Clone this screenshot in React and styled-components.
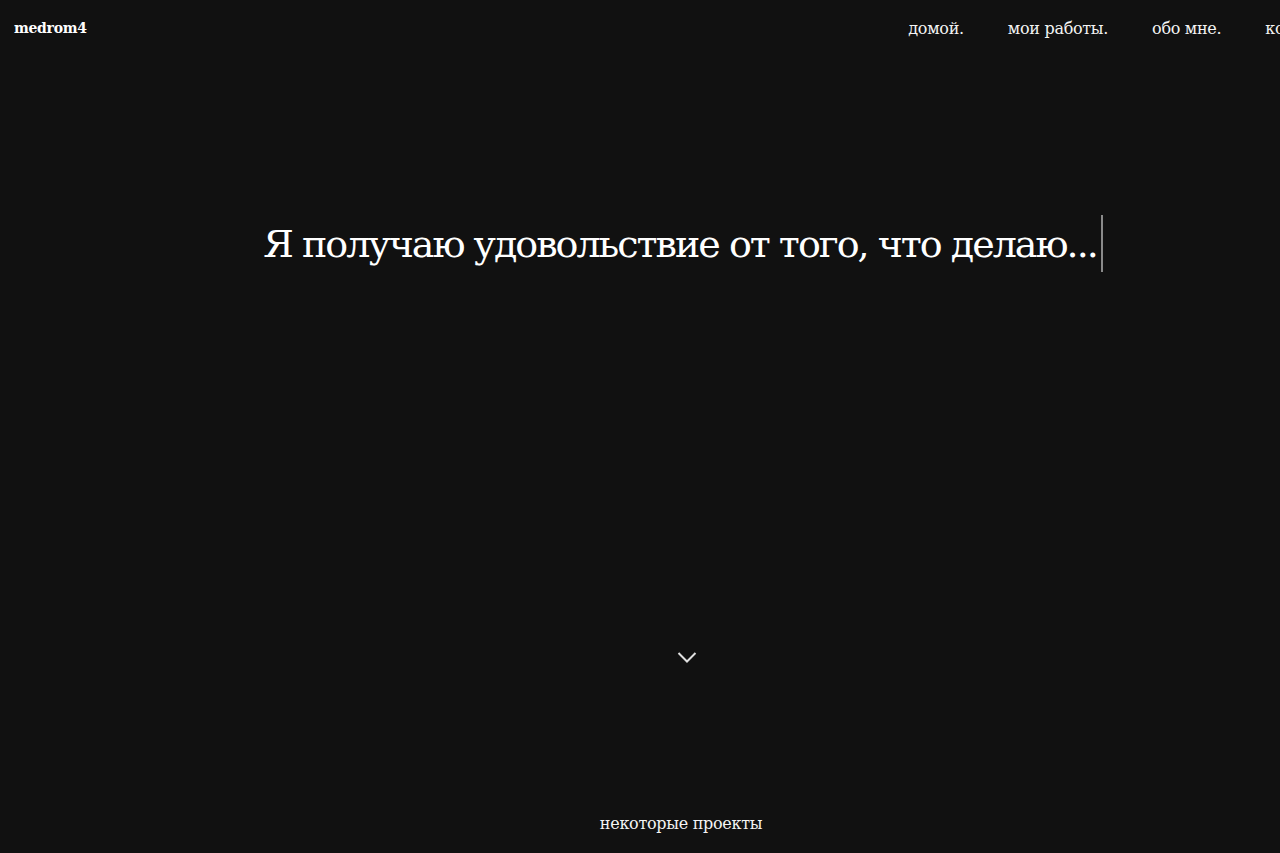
import React from 'react'
import styled, { createGlobalStyle } from 'styled-components'

const GlobalStyle = createGlobalStyle`
html, body {
    margin: 0;
    padding: 0;
    background-color: #111111;
    overflow: hidden;
}
body {
    font-family: "DejaVu Serif", "Liberation Serif", serif;
    color: #f2f2f2;
}
`

const Page = styled.div`
width: 1362px;
height: 853px;
display: flex;
flex-direction: column;
background-color: #111111;
`

const Header = styled.header`
height: 56px;
display: flex;
align-items: center;
justify-content: space-between;
padding: 0 14px 0 14px;
`

const Logo = styled.div`
font-size: 14px;
font-weight: bold;
color: #ffffff;
letter-spacing: -0.3px;
`

const Nav = styled.nav`
display: flex;
gap: 44px;
`

const NavLink = styled.a`
font-size: 16px;
color: #f4f4f4;
text-decoration: none;
letter-spacing: -0.3px;
cursor: pointer;
`

const Hero = styled.main`
flex: 1;
display: flex;
flex-direction: column;
align-items: center;
`

const Headline = styled.h1`
margin: 159px 0 0 4px;
display: flex;
align-items: center;
font-size: 38px;
font-weight: normal;
color: #ffffff;
letter-spacing: -2px;
`

const Caret = styled.span`
display: inline-block;
width: 2px;
height: 57px;
margin-left: 4px;
background-color: #8a8a8a;
`

const ScrollDown = styled.button`
margin-top: 379px;
background: transparent;
border: none;
padding: 0;
margin-left: 12px;
cursor: pointer;
`

const Footer = styled.div`
margin-top: auto;
padding-bottom: 20px;
font-size: 16px;
color: #f4f4f4;
letter-spacing: -0.3px;
`

const App = () => {
    return (
        <Page>
            <GlobalStyle />
            <Header>
                <Logo>medrom4</Logo>
                <Nav>
                    <NavLink>домой.</NavLink>
                    <NavLink>мои работы.</NavLink>
                    <NavLink>обо мне.</NavLink>
                    <NavLink>контакты.</NavLink>
                </Nav>
            </Header>
            <Hero>
                <Headline>
                    Я получаю удовольствие от того, что делаю...
                    <Caret />
                </Headline>
                <ScrollDown>
                    <svg width="20" height="13" viewBox="0 0 20 13">
                        <polyline points="1.5,2 10,10.5 18.5,2" fill="none" stroke="#e0e0e0" strokeWidth="2" />
                    </svg>
                </ScrollDown>
                <Footer>некоторые проекты</Footer>
            </Hero>
        </Page>
    )
}

export default App
